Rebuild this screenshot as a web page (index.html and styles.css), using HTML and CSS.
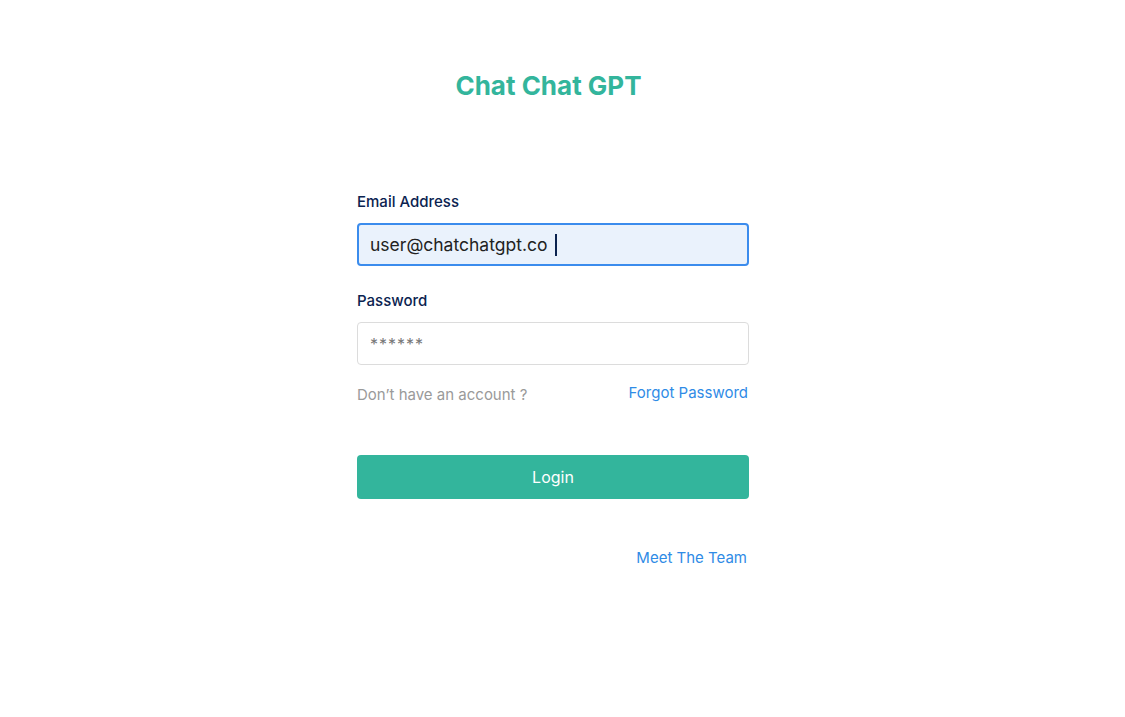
FILE: index.html
```html
<!DOCTYPE html>
<html>
<head>
<meta charset="utf-8">
<link rel="stylesheet" href="styles.css">
</head>
<body>
<main class="page">
  <h1 class="title">Chat Chat GPT</h1>
  <form class="form">
    <label class="label">Email Address</label>
    <div class="input input-active"><span class="value">user@chatchatgpt.co</span><span class="caret"></span></div>
    <label class="label label-pw">Password</label>
    <div class="input input-pw"><span class="mask">******</span></div>
    <div class="links">
      <span class="muted">Don’t have an account ?</span>
      <a class="link">Forgot Password</a>
    </div>
    <button type="button" class="btn">Login</button>
    <div class="team"><a class="link link-team">Meet The Team</a></div>
  </form>
</main>
</body>
</html>
```
FILE: styles.css
```css
* { box-sizing: border-box; }
html, body { margin: 0; background: #fff; }
body { font-family: Inter, "Noto Sans", sans-serif; }
.page { width: 392px; margin-left: 357px; padding-top: 70px; }
.title { margin: 0; padding-right: 9px; text-align: center; font-size: 26px; font-weight: 700; color: #33b59c; line-height: 32px; }
.form { display: flex; flex-direction: column; margin-top: 90px; }
.label { font-size: 15px; font-weight: 500; color: #0b2350; line-height: 20px; }
.label-pw { margin-top: 25px; }
.input { margin-top: 11px; height: 43px; border: 2px solid #dedede; border-radius: 4px; display: flex; align-items: center; padding-left: 11px; }
.input-active { border-color: #3b8ced; background: #eaf2fc; }
.input-pw { border: 1.5px solid #dcdcdc; padding-left: 12px; }
.value { font-size: 17.5px; color: #222; }
.caret { width: 2px; height: 22px; background: #0b2350; margin-left: 8px; }
.mask { font-size: 16px; color: #777; letter-spacing: 1px; }
.links { display: flex; justify-content: space-between; align-items: flex-start; margin-top: 18px; padding-right: 1px; }
.muted { font-size: 15px; color: #9a9a9a; margin-top: 2px; }
.link { font-size: 15px; color: #2f8be6; text-decoration: none; }
.btn { margin-top: 51px; height: 44px; border: 0; border-radius: 4px; background: #33b59c; color: #fff; font-family: inherit; font-size: 16px; font-weight: 400; }
.team { display: flex; justify-content: flex-end; margin-top: 49px; padding-right: 2px; }
.link-team { font-size: 15px; }
```
